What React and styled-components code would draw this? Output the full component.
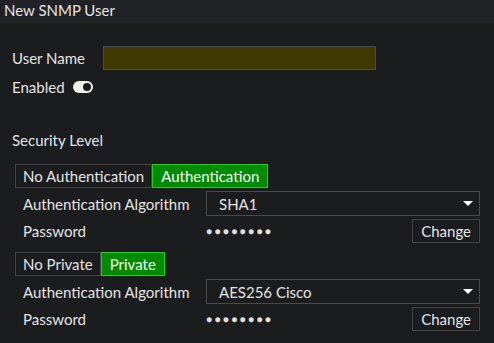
import styled, { createGlobalStyle } from "styled-components";

const Global = createGlobalStyle`
  html, body { margin: 0; padding: 0; background: #1b1c1e; }
  body { font-family: Lato, "Open Sans", sans-serif; font-size: 15px; color: #e4e4e4; }
`;

const Panel = styled.div`
  width: 494px;
  height: 343px;
  background: #1b1c1e;
  overflow: hidden;
`;

const Header = styled.div`
  height: 23px;
  background: #212225;
  padding-left: 4px;
  line-height: 21px;
`;

const Body = styled.div`
  padding: 23px 0 0 12px;
`;

const Row = styled.div`
  display: flex;
  align-items: center;
  height: ${(p) => p.h || 24}px;
  margin-top: ${(p) => p.mt || 0}px;
`;

const Label = styled.div`
  width: ${(p) => p.w}px;
  flex-shrink: 0;
`;

const NameInput = styled.div`
  width: 271px;
  height: 22px;
  background: #3d3900;
  border: 1px solid #4a4a4a;
`;

const Toggle = styled.div`
  width: 20px;
  height: 12px;
  border-radius: 6px;
  background: #eef2ea;
  margin-left: 8px;
  display: flex;
  align-items: center;
  justify-content: flex-end;
  padding-right: 2px;
  box-sizing: border-box;
  &::after {
    content: "";
    width: 8px;
    height: 8px;
    border-radius: 50%;
    background: #1b1c1e;
  }
`;

const Section = styled.div`
  margin-top: 35px;
  height: 20px;
  line-height: 20px;
`;

const Group = styled.div`
  padding-left: 3px;
  margin-top: ${(p) => p.mt}px;
`;

const Seg = styled.div`
  display: flex;
  height: 24px;
`;

const SegBtn = styled.div`
  box-sizing: border-box;
  height: 24px;
  line-height: 22px;
  padding: 0 ${(p) => p.px}px;
  border: 1px solid ${(p) => (p.on ? "#1fd01f" : "#444")};
  background: ${(p) => (p.on ? "#008a00" : "transparent")};
  color: ${(p) => (p.on ? "#f4fff4" : "#e4e4e4")};
  white-space: nowrap;
`;

const Field = styled.div`
  display: flex;
  align-items: center;
  padding-left: 8px;
  height: ${(p) => p.h}px;
  margin-top: ${(p) => p.mt || 0}px;
`;

const Select = styled.div`
  box-sizing: border-box;
  width: 274px;
  height: 25px;
  border: 1px solid #4a4a4a;
  display: flex;
  align-items: center;
  justify-content: space-between;
  padding: 0 6px 0 12px;
`;

const Arrow = styled.div`
  width: 0;
  height: 0;
  border-left: 5px solid transparent;
  border-right: 5px solid transparent;
  border-top: 5px solid #fff;
`;

const Dots = styled.div`
  flex: 1;
  font-size: 10px;
  letter-spacing: 2.4px;
  color: #e0e0e0;
`;

const ChangeBtn = styled.div`
  box-sizing: border-box;
  height: 24px;
  line-height: 22px;
  padding: 0 8px;
  border: 1px solid #444;
  margin-right: 14px;
`;

const Security = ({ off, on, offPx, onPx, algo, mt }) => (
  <Group mt={mt}>
    <Seg>
      <SegBtn px={offPx}>{off}</SegBtn>
      <SegBtn px={onPx} on>{on}</SegBtn>
    </Seg>
    <Field h={25} mt={3}>
      <Label w={183}>Authentication Algorithm</Label>
      <Select>
        <span>{algo}</span>
        <Arrow />
      </Select>
    </Field>
    <Field h={24} mt={3}>
      <Label w={183}>Password</Label>
      <Dots>●●●●●●●●</Dots>
      <ChangeBtn>Change</ChangeBtn>
    </Field>
  </Group>
);

export default function App() {
  return (
    <Panel>
      <Global />
      <Header>New SNMP User</Header>
      <Body>
        <Row>
          <Label w={91}>User Name</Label>
          <NameInput />
        </Row>
        <Row h={16} mt={9}>
          <span>Enabled</span>
          <Toggle />
        </Row>
        <Section>Security Level</Section>
        <Security mt={14} off="No Authentication" on="Authentication" offPx={7} onPx={8} algo="SHA1" />
        <Security mt={9} off="No Private" on="Private" offPx={7} onPx={8} algo="AES256 Cisco" />
      </Body>
    </Panel>
  );
}
